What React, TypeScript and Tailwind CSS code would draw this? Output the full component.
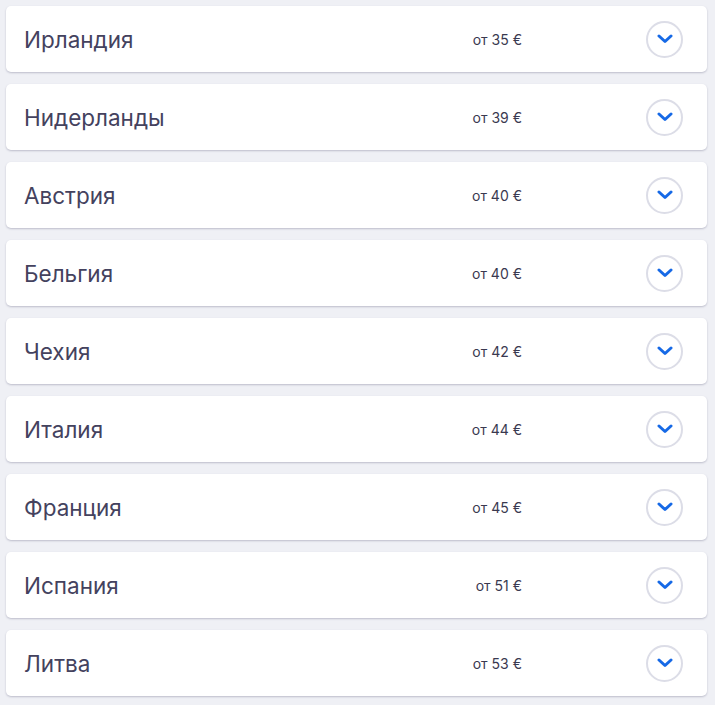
import React from "react";

const items: [string, string][] = [
  ["Ирландия", "от 35 €"],
  ["Нидерланды", "от 39 €"],
  ["Австрия", "от 40 €"],
  ["Бельгия", "от 40 €"],
  ["Чехия", "от 42 €"],
  ["Италия", "от 44 €"],
  ["Франция", "от 45 €"],
  ["Испания", "от 51 €"],
  ["Литва", "от 53 €"],
];

export default function App() {
  return (
    <div
      className="min-h-[705px] w-full bg-[#eff0f5] pt-[6px] pl-[6px] pr-[8px] flex flex-col gap-[12px]"
      style={{ fontFamily: "Inter, 'Noto Sans', sans-serif" }}
    >
      {items.map(([name, price]) => (
        <div
          key={name}
          className="h-[66px] bg-white rounded-[5px] shadow-[0_1px_2px_rgba(40,40,80,0.25)] flex items-center pl-[18px] pr-[24px]"
        >
          <div className="flex-1 pt-[2px] text-[22.5px] text-[#44425e]">{name}</div>
          <div className="text-[14px] text-[#3a3950] mr-[124px]">{price}</div>
          <div className="w-[37px] h-[37px] rounded-full border-2 border-[#dcdde7] flex items-center justify-center">
            <svg width="16" height="10" viewBox="0 0 16 10" fill="none">
              <path d="M2 2 L8 7.5 L14 2" stroke="#1669e6" strokeWidth="3" strokeLinecap="round" strokeLinejoin="round" />
            </svg>
          </div>
        </div>
      ))}
    </div>
  );
}
